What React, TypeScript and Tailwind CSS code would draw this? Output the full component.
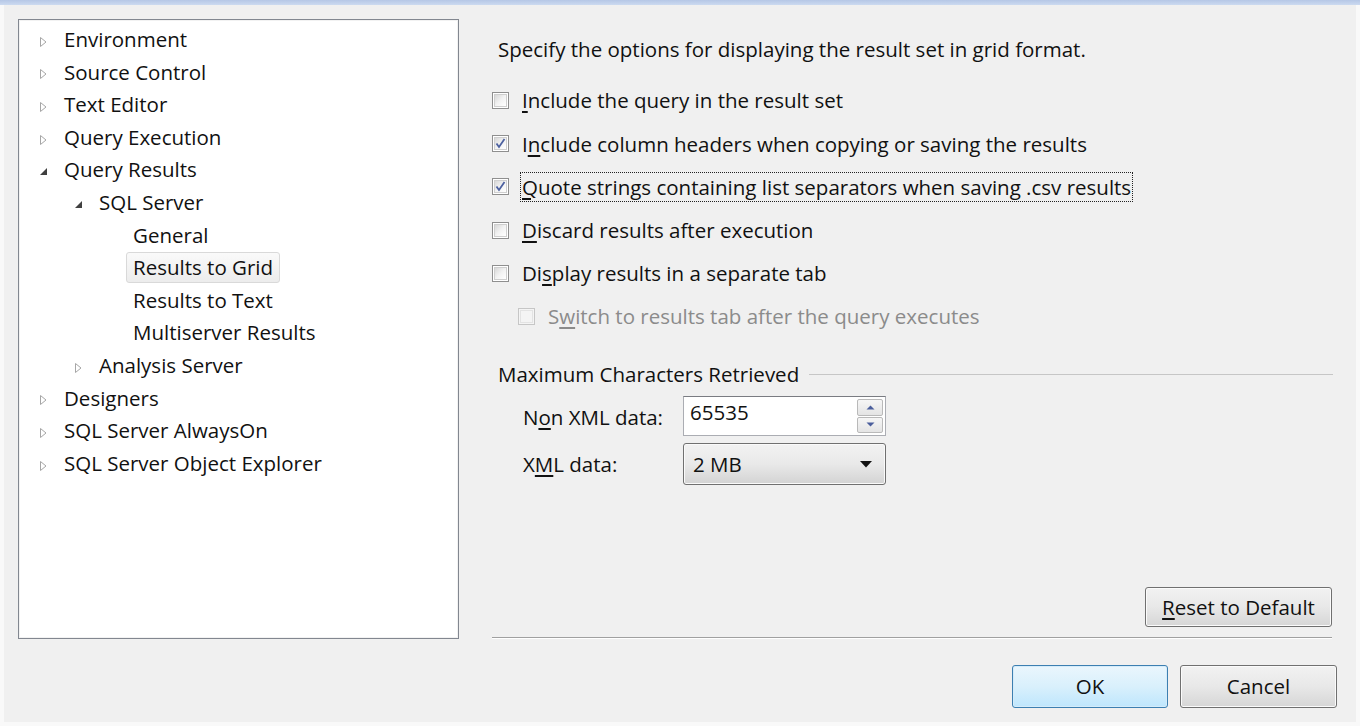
import type { ReactNode } from 'react'

const font = { fontFamily: '"Open Sans", "Noto Sans", sans-serif' }

type Node = { label: string; level: number; arrow?: 'closed' | 'open'; selected?: boolean }

const tree: Node[] = [
  { label: 'Environment', level: 0, arrow: 'closed' },
  { label: 'Source Control', level: 0, arrow: 'closed' },
  { label: 'Text Editor', level: 0, arrow: 'closed' },
  { label: 'Query Execution', level: 0, arrow: 'closed' },
  { label: 'Query Results', level: 0, arrow: 'open' },
  { label: 'SQL Server', level: 1, arrow: 'open' },
  { label: 'General', level: 2 },
  { label: 'Results to Grid', level: 2, selected: true },
  { label: 'Results to Text', level: 2 },
  { label: 'Multiserver Results', level: 2 },
  { label: 'Analysis Server', level: 1, arrow: 'closed' },
  { label: 'Designers', level: 0, arrow: 'closed' },
  { label: 'SQL Server AlwaysOn', level: 0, arrow: 'closed' },
  { label: 'SQL Server Object Explorer', level: 0, arrow: 'closed' },
]

function Arrow({ kind }: { kind?: 'closed' | 'open' }) {
  if (kind === 'closed')
    return (
      <svg width="9" height="12" viewBox="0 0 9 12" className="mt-[5px]">
        <path d="M1.5 1.5 L7 6 L1.5 10.5 Z" fill="#ffffff" stroke="#a6a6a6" strokeWidth="1" />
      </svg>
    )
  if (kind === 'open')
    return (
      <svg width="9" height="12" viewBox="0 0 9 12" className="mt-[3px]">
        <path d="M8 3 L8 10 L1 10 Z" fill="#404040" />
      </svg>
    )
  return <span className="w-[9px]" />
}

function TreeRow({ node }: { node: Node }) {
  const indent = [20, 55, 114][node.level]
  return (
    <div className="flex h-[32.6px] items-center" style={{ paddingLeft: indent }}>
      {node.level < 2 && <div className="w-[25px] flex"><Arrow kind={node.arrow} /></div>}
      <span
        className={
          node.selected
            ? 'px-[6px] -ml-[7px] h-[31px] flex items-center rounded-[3px] border border-[#d9d9d9] bg-gradient-to-b from-[#fafafa] to-[#ececec]'
            : ''
        }
      >
        {node.label}
      </span>
    </div>
  )
}

function U({ children }: { children: ReactNode }) {
  return <span className="underline underline-offset-[3px]">{children}</span>
}

function Check({ checked, disabled }: { checked?: boolean; disabled?: boolean }) {
  return (
    <span
      className={
        'w-[17px] h-[17px] shrink-0 border flex items-center justify-center ' +
        (disabled ? 'border-[#c6c6c6] bg-[#f4f4f4]' : 'border-[#8f8f8f] bg-white')
      }
    >
      <span
        className={
          'w-[13px] h-[13px] border flex items-center justify-center ' +
          (disabled
            ? 'border-[#e3e3e3] bg-[#f4f4f4]'
            : 'border-[#cfcfcf] bg-gradient-to-br from-[#d8d8d8] via-[#f2f2f2] to-[#ffffff]')
        }
      >
        {checked && (
          <svg width="11" height="11" viewBox="0 0 11 11">
            <path d="M1.5 5.5 L4 9 L9.5 1" fill="none" stroke="#4d61a0" strokeWidth="1.8" />
          </svg>
        )}
      </span>
    </span>
  )
}

function Option({ children, checked, disabled, focused, indent }: { children: ReactNode; checked?: boolean; disabled?: boolean; focused?: boolean; indent?: boolean }) {
  return (
    <div className={'flex items-center h-[43.2px] ' + (indent ? 'pl-[26px]' : '')}>
      <Check checked={checked} disabled={disabled} />
      <span
        className={
          'ml-[11px] px-[1px] h-[30px] flex items-center ' +
          (focused ? 'border border-dotted border-[#222]' : 'border border-transparent') +
          (disabled ? ' text-[#8b8b8b]' : '')
        }
      >
        {children}
      </span>
    </div>
  )
}

function WinButton({ children, primary, className }: { children: ReactNode; primary?: boolean; className?: string }) {
  return (
    <button
      className={
        'rounded-[3px] border flex items-center justify-center ' +
        (primary
          ? 'border-[#3c7fb1] bg-gradient-to-b from-[#eaf6fd] via-[#d9f0fc] to-[#bee6fd] shadow-[inset_0_0_0_1px_#d5ecfa]'
          : 'border-[#707070] bg-gradient-to-b from-[#f2f2f2] via-[#e8e8e8] to-[#d6d6d6] shadow-[inset_0_0_0_1px_#fbfbfb]') +
        ' ' +
        (className ?? '')
      }
    >
      {children}
    </button>
  )
}

export default function App() {
  return (
    <div className="w-[1360px] h-[726px] bg-[#f9f9f9] text-[20.5px] leading-none text-[#111] overflow-hidden" style={font}>
      <div className="h-[5px] bg-gradient-to-b from-[#b5c7e6] to-[#ccdaf0]" />
      <div className="mx-[4px] h-[717px] bg-[#f0f0f0] flex flex-col">
        <div className="flex pt-[14px] pl-[14px]">
          <div className="w-[441px] h-[620px] bg-white border border-[#828790] shadow-[inset_0_0_0_1px_#f2f2f2] pt-[3px]">
            {tree.map((n) => (
              <TreeRow key={n.label} node={n} />
            ))}
          </div>
          <div className="ml-[33px] w-[843px] flex flex-col">
            <div className="h-[60px] pt-[20px] pl-[6px]">Specify the options for displaying the result set in grid format.</div>
            <Option>
              <U>I</U>nclude the query in the result set
            </Option>
            <Option checked>
              I<U>n</U>clude column headers when copying or saving the results
            </Option>
            <Option checked focused>
              <U>Q</U>uote strings containing list separators when saving .csv results
            </Option>
            <Option>
              <U>D</U>iscard results after execution
            </Option>
            <Option>
              Di<U>s</U>play results in a separate tab
            </Option>
            <Option disabled indent>
              S<U>w</U>itch to results tab after the query executes
            </Option>
            <div className="flex items-center h-[30px] mt-[21px] pl-[6px]">
              <span>Maximum Characters Retrieved</span>
              <span className="flex-1 ml-[10px] mr-[2px] h-px bg-[#c6c6c6]" />
            </div>
            <div className="flex items-center mt-[7px] pl-[31px]">
              <span className="w-[160px] pt-[2px]">
                N<U>o</U>n XML data:
              </span>
              <div className="w-[203px] h-[40px] bg-white border border-[#abadb3] border-t-[#7a7c82] flex">
                <span className="flex-1 pl-[6px] pt-[5px] text-[#111]">65535</span>
                <div className="w-[28px] flex flex-col gap-[1px] py-[2px] pr-[2px]">
                  <div className="flex-1 border border-[#b9b9b9] rounded-[2px] bg-gradient-to-b from-[#f6f6f6] to-[#e4e4e4] flex items-center justify-center">
                    <svg width="9" height="5" viewBox="0 0 9 5"><path d="M0.5 4.5 L4.5 0.5 L8.5 4.5 Z" fill="#4b5e9c" /></svg>
                  </div>
                  <div className="flex-1 border border-[#b9b9b9] rounded-[2px] bg-gradient-to-b from-[#f6f6f6] to-[#e4e4e4] flex items-center justify-center">
                    <svg width="9" height="5" viewBox="0 0 9 5"><path d="M0.5 0.5 L4.5 4.5 L8.5 0.5 Z" fill="#4b5e9c" /></svg>
                  </div>
                </div>
              </div>
            </div>
            <div className="flex items-center mt-[7px] pl-[31px]">
              <span className="w-[160px]">
                X<U>M</U>L data:
              </span>
              <div className="w-[203px] h-[42px] rounded-[3px] border border-[#707070] bg-gradient-to-b from-[#f2f2f2] via-[#e9e9e9] to-[#d3d3d3] shadow-[inset_0_0_0_1px_#fafafa] flex items-center pl-[9px] pr-[13px]">
                <span className="flex-1">2 MB</span>
                <svg width="12" height="7" viewBox="0 0 12 7"><path d="M0 0 L12 0 L6 6.5 Z" fill="#111" /></svg>
              </div>
            </div>
            <div className="flex-1" />
            <div className="flex justify-end pr-[3px]">
              <WinButton className="w-[187px] h-[40px]">
                <U>R</U>eset to Default
              </WinButton>
            </div>
            <div className="mt-[10px] mr-[3px] h-px bg-[#a0a0a0] border-b border-white box-content" />
          </div>
        </div>
        <div className="flex justify-end gap-[12px] mt-[26px] pr-[19px]">
          <WinButton primary className="w-[156px] h-[43px]">OK</WinButton>
          <WinButton className="w-[157px] h-[43px]">Cancel</WinButton>
        </div>
      </div>
    </div>
  )
}
